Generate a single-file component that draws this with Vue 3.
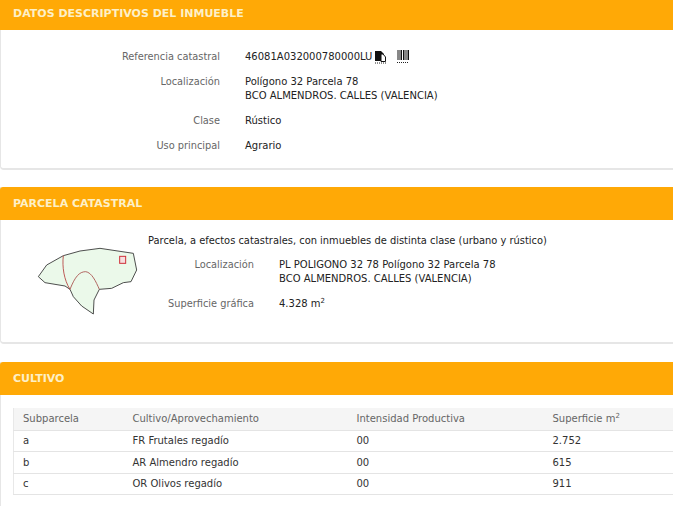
<template>
  <div class="page">
    <section class="panel first">
      <h2 class="panel-title">DATOS DESCRIPTIVOS DEL INMUEBLE</h2>
      <div class="panel-body datos">
        <div class="row">
          <div class="label">Referencia catastral</div>
          <div class="value ref">
            <span>46081A032000780000LU</span>
            <svg class="icon-copy" width="13" height="14" viewBox="0 0 13 14">
              <path d="M1 1h6l3 3v7H1z" fill="#111" />
              <path d="M7 4h2l2.500 3v4.500H7z" fill="#fff" stroke="#111" stroke-width="1" />
              <path d="M1 13h11" stroke="#222" stroke-width="1" stroke-dasharray="1 1" />
            </svg>
            <svg class="icon-bar" width="12" height="14" viewBox="0 0 12 14">
              <path d="M1 0v10M3 0v10M4.500 0v10M6.500 0v10M8 0v10M10 0v10M11.500 0v10" stroke="#111" stroke-width="1" />
              <path d="M0 12.500h12" stroke="#222" stroke-width="1" stroke-dasharray="1 1" />
            </svg>
          </div>
        </div>
        <div class="row">
          <div class="label">Localización</div>
          <div class="value">Polígono 32 Parcela 78<br />BCO ALMENDROS. CALLES (VALENCIA)</div>
        </div>
        <div class="row">
          <div class="label">Clase</div>
          <div class="value">Rústico</div>
        </div>
        <div class="row">
          <div class="label">Uso principal</div>
          <div class="value">Agrario</div>
        </div>
      </div>
    </section>

    <section class="panel">
      <h2 class="panel-title">PARCELA CATASTRAL</h2>
      <div class="panel-body parcela">
        <svg class="plano" width="130" height="95" viewBox="0 0 390 285">
          <path
            d="M55 140 L80 105 L130 77 L180 63 L240 55 L340 70 L350 120 L333 155 L310 158 L275 175 L238 178 L222 210 L220 252 L185 228 L160 200 L150 178 L135 168 L75 158 Z"
            fill="#ebf9ea" stroke="#333" stroke-width="2.600" stroke-linejoin="round" />
          <path d="M130 77 C126 110 132 150 150 178" fill="none" stroke="#b5413f" stroke-width="2.600" />
          <path d="M150 178 C165 140 178 125 197 125 C215 127 228 155 238 178" fill="none" stroke="#a8504c" stroke-width="2.600" />
          <rect x="299" y="79" width="18" height="21" fill="#f6dede" stroke="#d0303a" stroke-width="3" />
        </svg>
        <div class="parcela-info">
          <p class="nota">Parcela, a efectos catastrales, con inmuebles de distinta clase (urbano y rústico)</p>
          <div class="row">
            <div class="label">Localización</div>
            <div class="value">PL POLIGONO 32 78 Polígono 32 Parcela 78<br />BCO ALMENDROS. CALLES (VALENCIA)</div>
          </div>
          <div class="row">
            <div class="label">Superficie gráfica</div>
            <div class="value">4.328 m<sup>2</sup></div>
          </div>
        </div>
      </div>
    </section>

    <section class="panel">
      <h2 class="panel-title">CULTIVO</h2>
      <div class="panel-body cultivo">
        <table>
          <thead>
            <tr>
              <th class="c1">Subparcela</th>
              <th class="c2">Cultivo/Aprovechamiento</th>
              <th class="c3">Intensidad Productiva</th>
              <th>Superficie m<sup>2</sup></th>
            </tr>
          </thead>
          <tbody>
            <tr v-for="fila in filas" :key="fila.sub">
              <td>{{ fila.sub }}</td>
              <td>{{ fila.cultivo }}</td>
              <td>{{ fila.intensidad }}</td>
              <td>{{ fila.superficie }}</td>
            </tr>
          </tbody>
        </table>
      </div>
    </section>
  </div>
</template>

<script setup>
const filas = [
  { sub: 'a', cultivo: 'FR Frutales regadío', intensidad: '00', superficie: '2.752' },
  { sub: 'b', cultivo: 'AR Almendro regadío', intensidad: '00', superficie: '615' },
  { sub: 'c', cultivo: 'OR Olivos regadío', intensidad: '00', superficie: '911' },
]
</script>

<style>
html,
body {
  margin: 0;
  background: #fff;
  overflow: hidden;
}
</style>

<style scoped>
.page {
  width: 673px;
  height: 506px;
  overflow: hidden;
  font-family: "DejaVu Sans", Verdana, sans-serif;
  font-size: 10px;
  color: #222;
}

.panel {
  width: 680px;
  box-sizing: border-box;
  margin-bottom: 18px;
  background: #fff;
  border: 1px solid #e6e6e6;
  border-width: 0 0 2px 1px;
  border-radius: 0 0 4px 4px;
}

.first {
  margin-bottom: 17px;
}

.panel-title {
  margin: 0 0 0 -1px;
  padding: 0 0 0 13px;
  height: 33px;
  line-height: 33px;
  background: #ffa906;
  color: #fdf0c8;
  font-family: "DejaVu Sans", Verdana, sans-serif;
  font-size: 11px;
  font-weight: bold;
  border-radius: 3px 3px 0 0;
}

.first .panel-title {
  height: 30px;
  line-height: 27px;
  border-radius: 0;
}

.datos {
  padding: 20px 0 16px;
  height: 102px;
}

.row {
  display: flex;
  line-height: 14px;
  margin-bottom: 11px;
}

.label {
  width: 219px;
  text-align: right;
  color: #666;
  font-size: 9.800px;
}

.value {
  margin-left: 25px;
  white-space: nowrap;
  color: #222;
}

.ref {
  display: flex;
  align-items: center;
}

.icon-copy {
  margin-left: 2px;
}

.icon-bar {
  margin-left: 10px;
}

sup {
  font-size: 7px;
  line-height: 0;
}

.parcela {
  display: flex;
  height: 122px;
}

.plano {
  flex: none;
  margin: 10px 0 0 19px;
}

.parcela-info {
  margin-left: -2px;
  padding-top: 14px;
}

.nota {
  margin: 0 0 10px;
  line-height: 14px;
  white-space: nowrap;
  font-size: 9.900px;
}

.parcela-info .label {
  width: 106px;
}

.parcela-info .row {
  margin-bottom: 11px;
}

.cultivo {
  padding: 13px 0 13px 12px;
}

table {
  width: 661px;
  border-collapse: collapse;
  border-left: 1px solid #e8e8e8;
}

th,
td {
  box-sizing: border-box;
  padding: 0 0 0 9px;
  text-align: left;
  font-weight: normal;
  height: 21.500px;
  border-bottom: 1px solid #e4e4e4;
  white-space: nowrap;
}

th {
  height: 22px;
  background: #f5f5f5;
  color: #666;
}

td {
  color: #333;
}

.c1 {
  width: 110px;
}

.c2 {
  width: 224px;
}

.c3 {
  width: 196px;
}
</style>
